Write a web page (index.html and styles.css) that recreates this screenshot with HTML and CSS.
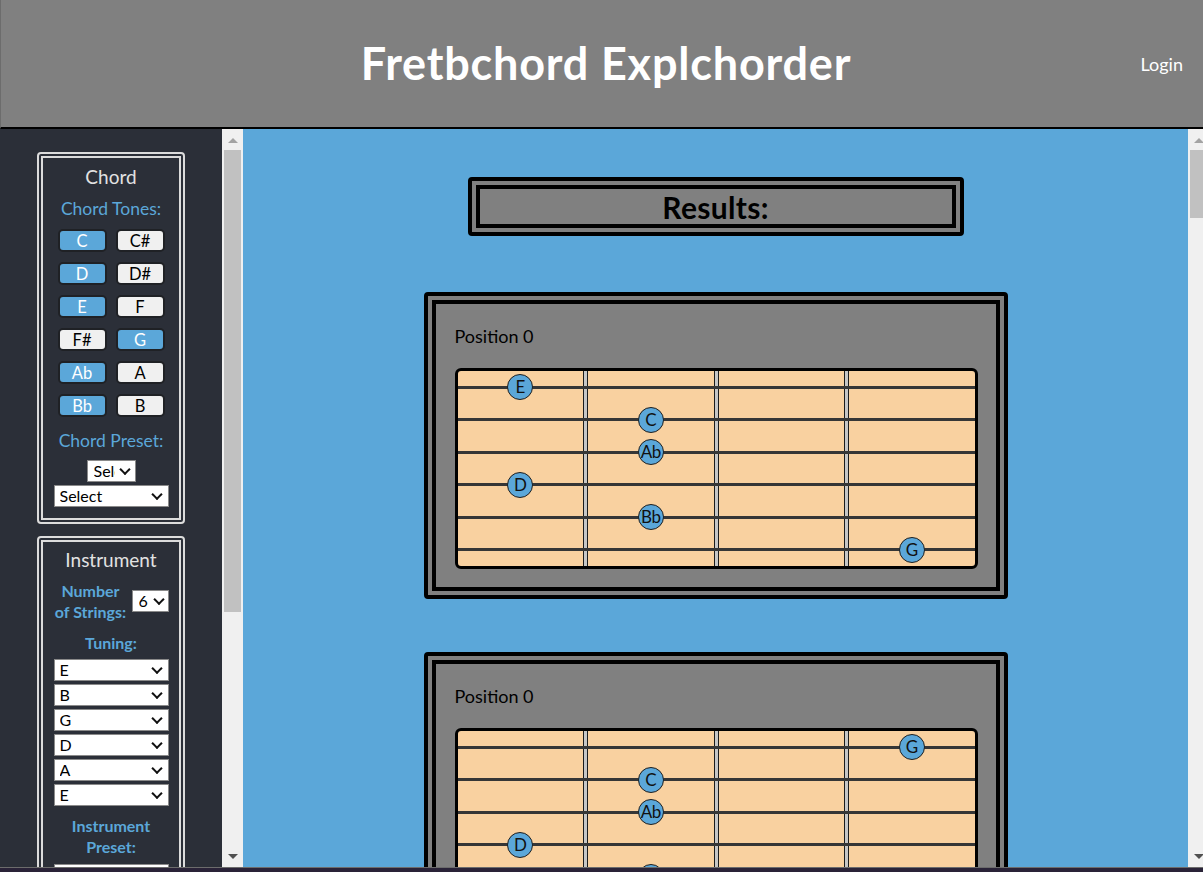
FILE: index.html
```html
<!DOCTYPE html>
<html lang="en">
<head>
<meta charset="utf-8">
<title>Fretbchord Explchorder</title>
<link rel="stylesheet" href="styles.css">
</head>
<body>
<div class="app">
  <header class="topbar">
    <span class="topbar-spacer"></span>
    <h1 class="title">Fretbchord Explchorder</h1>
    <a class="login" href="#">Login</a>
  </header>

  <div class="workspace">
    <aside class="sidebar">
      <div class="sidebar-pane">
        <section class="panel">
          <h2 class="panel-title">Chord</h2>
          <div class="panel-label">Chord Tones:</div>
          <div class="tone-grid">
            <button class="tone on">C</button><button class="tone">C#</button>
            <button class="tone on">D</button><button class="tone">D#</button>
            <button class="tone on">E</button><button class="tone">F</button>
            <button class="tone">F#</button><button class="tone on">G</button>
            <button class="tone on">Ab</button><button class="tone">A</button>
            <button class="tone on">Bb</button><button class="tone">B</button>
          </div>
          <div class="panel-label preset-label">Chord Preset:</div>
          <label class="sel sel-small"><select><option>Select</option></select></label>
          <label class="sel sel-wide"><select><option>Select</option></select></label>
        </section>

        <section class="panel panel-instrument">
          <h2 class="panel-title">Instrument</h2>
          <div class="strings-row">
            <span class="panel-label strong">Number<br>of Strings:</span>
            <label class="sel sel-num"><select><option>6</option></select></label>
          </div>
          <div class="panel-label strong tuning-label">Tuning:</div>
          <div class="tuning">
            <label class="sel sel-wide"><select><option>E</option></select></label>
            <label class="sel sel-wide"><select><option>B</option></select></label>
            <label class="sel sel-wide"><select><option>G</option></select></label>
            <label class="sel sel-wide"><select><option>D</option></select></label>
            <label class="sel sel-wide"><select><option>A</option></select></label>
            <label class="sel sel-wide"><select><option>E</option></select></label>
          </div>
          <div class="panel-label strong inst-preset-label">Instrument<br>Preset:</div>
          <label class="sel sel-wide sel-preset"><select><option>Select</option></select></label>
        </section>
      </div>
      <div class="vscroll">
        <span class="arrow-up"></span>
        <span class="thumb thumb-side"></span>
        <span class="arrow-down"></span>
      </div>
    </aside>

    <main class="main">
      <div class="main-pane">
        <div class="results-head"><h2>Results:</h2></div>

        <article class="card">
          <p class="card-title">Position 0</p>
          <div class="fretboard">
            <span class="fret f1"></span><span class="fret f2"></span><span class="fret f3"></span>
            <span class="string r1"></span><span class="string r2"></span><span class="string r3"></span>
            <span class="string r4"></span><span class="string r5"></span><span class="string r6"></span>
            <span class="note r1 c1">E</span>
            <span class="note r2 c2">C</span>
            <span class="note r3 c2">Ab</span>
            <span class="note r4 c1">D</span>
            <span class="note r5 c2">Bb</span>
            <span class="note r6 c4">G</span>
          </div>
        </article>

        <article class="card">
          <p class="card-title">Position 0</p>
          <div class="fretboard">
            <span class="fret f1"></span><span class="fret f2"></span><span class="fret f3"></span>
            <span class="string r1"></span><span class="string r2"></span><span class="string r3"></span>
            <span class="string r4"></span><span class="string r5"></span><span class="string r6"></span>
            <span class="note r1 c4">G</span>
            <span class="note r2 c2">C</span>
            <span class="note r3 c2">Ab</span>
            <span class="note r4 c1">D</span>
            <span class="note r5 c2">Bb</span>
            <span class="note r6 c1">E</span>
          </div>
        </article>
      </div>
      <div class="vscroll vscroll-main">
        <span class="arrow-up"></span>
        <span class="thumb thumb-main"></span>
        <span class="arrow-down"></span>
      </div>
    </main>
  </div>

  <div class="taskbar"></div>
</div>
</body>
</html>
```

FILE: styles.css
```css
* { box-sizing: border-box; }

html, body {
  margin: 0;
  padding: 0;
  width: 1203px;
  height: 872px;
  overflow: hidden;
}

body {
  font-family: "Lato", "Noto Sans", sans-serif;
  background: #2b2f38;
}

.app {
  display: flex;
  flex-direction: column;
  height: 872px;
  width: 1203px;
  overflow: hidden;
}

/* ---------- header ---------- */
.topbar {
  flex: none;
  height: 129px;
  background: #808080;
  border-bottom: 2px solid #000;
  border-left: 1px solid #6c6c6c;
  display: grid;
  grid-template-columns: 1fr auto 1fr;
  align-items: center;
  padding-left: 8px;
}

.title {
  margin: 0;
  font-size: 45px;
  font-weight: 700;
  line-height: 1;
  letter-spacing: 0.8px;
  color: #fff;
}

.login {
  justify-self: end;
  margin-right: 20px;
  color: #fff;
  text-decoration: none;
  font-size: 18px;
}

/* ---------- workspace ---------- */
.workspace {
  flex: none;
  height: 738px;
  display: flex;
  overflow: hidden;
}

.sidebar {
  flex: none;
  width: 243px;
  display: flex;
}

.sidebar-pane {
  width: 222px;
  background: #2b2f38;
  overflow: hidden;
  padding-top: 23px;
}

.panel {
  width: 148px;
  margin: 0 auto 12px;
  border: 6px double #dcdcdc;
  border-radius: 4px;
  padding: 7px 0 11px;
  display: flex;
  flex-direction: column;
  align-items: center;
}

.panel-title {
  margin: 0;
  font-size: 19px;
  line-height: 24px;
  font-weight: 400;
  color: #e2e2e2;
}

.panel-label {
  color: #5ba7d9;
  font-size: 17.5px;
  line-height: 24px;
  text-align: center;
  margin-top: 8px;
}

.panel-label.strong {
  font-weight: 700;
  font-size: 16px;
  line-height: 21px;
}

.tone-grid {
  margin-top: 8px;
  display: grid;
  grid-template-columns: 49px 49px;
  column-gap: 9px;
  row-gap: 10px;
}

.tone {
  height: 23px;
  padding: 0;
  border: 2px solid #1f2125;
  border-radius: 5px;
  background: #f0f0f0;
  color: #000;
  font-family: inherit;
  font-size: 16.5px;
  line-height: 18px;
}

.tone.on {
  background: #5ba7d9;
  color: #fff;
}

.preset-label { margin-top: 12px; }

/* selects */
.sel {
  position: relative;
  display: block;
  width: 115px;
}

.sel::after {
  content: "";
  position: absolute;
  right: 8px;
  top: 50%;
  width: 6px;
  height: 6px;
  border-right: 2px solid #111;
  border-bottom: 2px solid #111;
  transform: translateY(-70%) rotate(45deg);
  pointer-events: none;
}

.sel select {
  appearance: none;
  -webkit-appearance: none;
  display: block;
  width: 100%;
  height: 22px;
  margin: 0;
  padding: 0 20px 0 5px;
  border: 1px solid #8a8a8a;
  border-radius: 0;
  background: #fff;
  color: #000;
  font-family: inherit;
  font-size: 16px;
  line-height: 20px;
}

.sel-small {
  width: 49px;
  margin-top: 7px;
}

.sel-small select { padding-left: 6px; }
.sel-small::after { right: 7px; }

.sel-small + .sel-wide { margin-top: 3px; }

.sel-num { width: 37px; }
.sel-num select { padding-left: 6px; }
.sel-num::after { right: 6px; }

.panel-instrument { padding-top: 6px; }

.strings-row {
  margin-top: 8px;
  width: 115px;
  display: flex;
  align-items: center;
  justify-content: space-between;
}

.strings-row .panel-label { margin-top: 0; width: 74px; }

.tuning-label { margin-top: 10px; line-height: 24px; }

.tuning {
  margin-top: 6px;
  display: flex;
  flex-direction: column;
  gap: 3px;
}

.inst-preset-label { margin-top: 9px; margin-bottom: 7px; }

.sel-preset select { padding-top: 4px; }

/* scrollbars */
.vscroll {
  flex: none;
  width: 21px;
  background: #f0f0f0;
  display: flex;
  flex-direction: column;
  align-items: center;
}

.arrow-up {
  flex: none;
  margin-top: 9px;
  width: 0;
  height: 0;
  border-left: 5px solid transparent;
  border-right: 5px solid transparent;
  border-bottom: 5px solid #a3a3a3;
}

.arrow-down {
  flex: none;
  margin-top: auto;
  margin-bottom: 8px;
  width: 0;
  height: 0;
  border-left: 5px solid transparent;
  border-right: 5px solid transparent;
  border-top: 5px solid #505050;
}

.thumb {
  flex: none;
  width: 17px;
  background: #c1c1c1;
  margin-top: 7px;
}

.thumb-side { height: 462px; }
.thumb-main { height: 68px; }

/* ---------- main ---------- */
.main {
  flex: none;
  display: flex;
  width: 966px;
}

.main-pane {
  width: 945px;
  background: #5ba7d9;
  overflow: hidden;
  padding-top: 48px;
  display: flex;
  flex-direction: column;
  align-items: center;
}

.results-head {
  flex: none;
  width: 496px;
  height: 59px;
  border: 12px double #000;
  border-radius: 4px;
  background: #808080;
  display: flex;
  align-items: center;
  justify-content: center;
}

.results-head h2 {
  margin: 0;
  font-size: 30px;
  line-height: 1;
  font-weight: 700;
  letter-spacing: 0.3px;
  color: #000;
}

.card {
  flex: none;
  width: 584px;
  height: 307px;
  margin-top: 56px;
  border: 12px double #000;
  border-radius: 4px;
  background: #808080;
  padding: 19px 18px 18px 19px;
}

.card + .card { margin-top: 53px; }

.card-title {
  margin: 0 0 19px;
  font-size: 18px;
  line-height: 26px;
  color: #000;
}

.fretboard {
  width: 523px;
  height: 201px;
  border: 3px solid #000;
  border-radius: 6px;
  background: #f9d1a0;
  display: grid;
  grid-template-columns: 1fr 5px 1fr 5px 1fr 5px 1fr;
  grid-template-rows: repeat(6, 1fr);
}

.fret {
  grid-row: 1 / -1;
  background: #c6c6c6;
  border-left: 1px solid #1c1c1c;
  border-right: 1px solid #1c1c1c;
}
.f1 { grid-column: 2; }
.f2 { grid-column: 4; }
.f3 { grid-column: 6; }

.string {
  grid-column: 1 / -1;
  background: linear-gradient(#363636, #363636) center / 100% 3px no-repeat;
  z-index: 1;
}

.r1 { grid-row: 1; }
.r2 { grid-row: 2; }
.r3 { grid-row: 3; }
.r4 { grid-row: 4; }
.r5 { grid-row: 5; }
.r6 { grid-row: 6; }

.note {
  z-index: 2;
  justify-self: center;
  align-self: center;
  width: 26px;
  height: 26px;
  border-radius: 50%;
  border: 1px solid #1e1e1e;
  background: #5ba7d9;
  color: #111;
  font-size: 17px;
  line-height: 24px;
  text-align: center;
  letter-spacing: -0.5px;
}
.c1 { grid-column: 1; }
.c2 { grid-column: 3; }
.c3 { grid-column: 5; }
.c4 { grid-column: 7; }

.taskbar {
  flex: none;
  height: 5px;
  background: #2a2338;
  border-top: 1px solid #6c6c6c;
}
```
